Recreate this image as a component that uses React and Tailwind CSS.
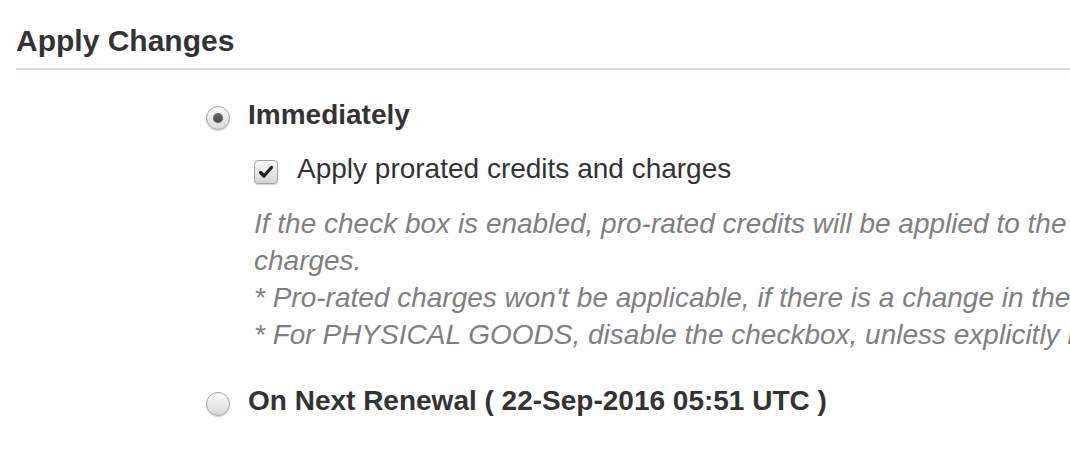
import React from "react";

function Radio({ checked }) {
  return (
    <span className="relative mt-[7px] flex h-[24px] w-[24px] shrink-0 items-center justify-center rounded-full border border-[#a3a3a3] bg-gradient-to-b from-[#fbfbfb] to-[#d9d9d9] shadow-[0_1px_1px_rgba(0,0,0,0.18)]">
      {checked && <span className="h-[10px] w-[10px] rounded-full bg-gradient-to-b from-[#6a6a6a] to-[#4a4a4a]" />}
    </span>
  );
}

function Checkbox() {
  return (
    <span className="mt-[7px] flex h-[24px] w-[24px] shrink-0 items-center justify-center rounded-[4px] border border-[#a3a3a3] bg-gradient-to-b from-[#f8f8f8] to-[#d6d6d6] shadow-[0_1px_1px_rgba(0,0,0,0.18)]">
      <svg width="16" height="14" viewBox="0 0 16 14">
        <path d="M2.5 7.5 L6 11 L13.5 2.5" fill="none" stroke="#1f1f1f" strokeWidth="3.2" strokeLinecap="round" strokeLinejoin="round" />
      </svg>
    </span>
  );
}

export default function App() {
  return (
    <div className="h-[466px] w-[1070px] overflow-hidden bg-white font-['Liberation_Sans',Arial,sans-serif] text-[#333333]">
      <div className="ml-4 border-b-2 border-[#dadeea] pb-[9px] pt-[23px]">
        <h2 className="text-[30px] font-bold leading-[36px]">Apply Changes</h2>
      </div>

      <div className="pl-[206px] pt-[29px]">
        <div className="flex gap-[18px]">
          <Radio checked />
          <span className="text-[28px] font-bold leading-[32px]">Immediately</span>
        </div>

        <div className="pl-[48px] pt-[22px]">
          <div className="flex gap-[19px]">
            <Checkbox />
            <span className="whitespace-nowrap text-[28px] leading-[32px]">Apply prorated credits and charges</span>
          </div>
          <div className="pt-[20px] text-[28px] italic leading-[37px] text-[#808080]">
            <p className="w-[840px]">
              If the check box is enabled, pro-rated credits will be applied to the charges.
            </p>
            <p className="whitespace-nowrap">* Pro-rated charges won't be applicable, if there is a change in the plan.</p>
            <p className="whitespace-nowrap">* For PHYSICAL GOODS, disable the checkbox, unless explicitly required.</p>
          </div>
        </div>

        <div className="flex gap-[18px] pt-[32px]">
          <Radio />
          <span className="whitespace-nowrap text-[28px] font-bold leading-[32px]">
            On Next Renewal ( 22-Sep-2016 05:51 UTC )
          </span>
        </div>
      </div>
    </div>
  );
}
